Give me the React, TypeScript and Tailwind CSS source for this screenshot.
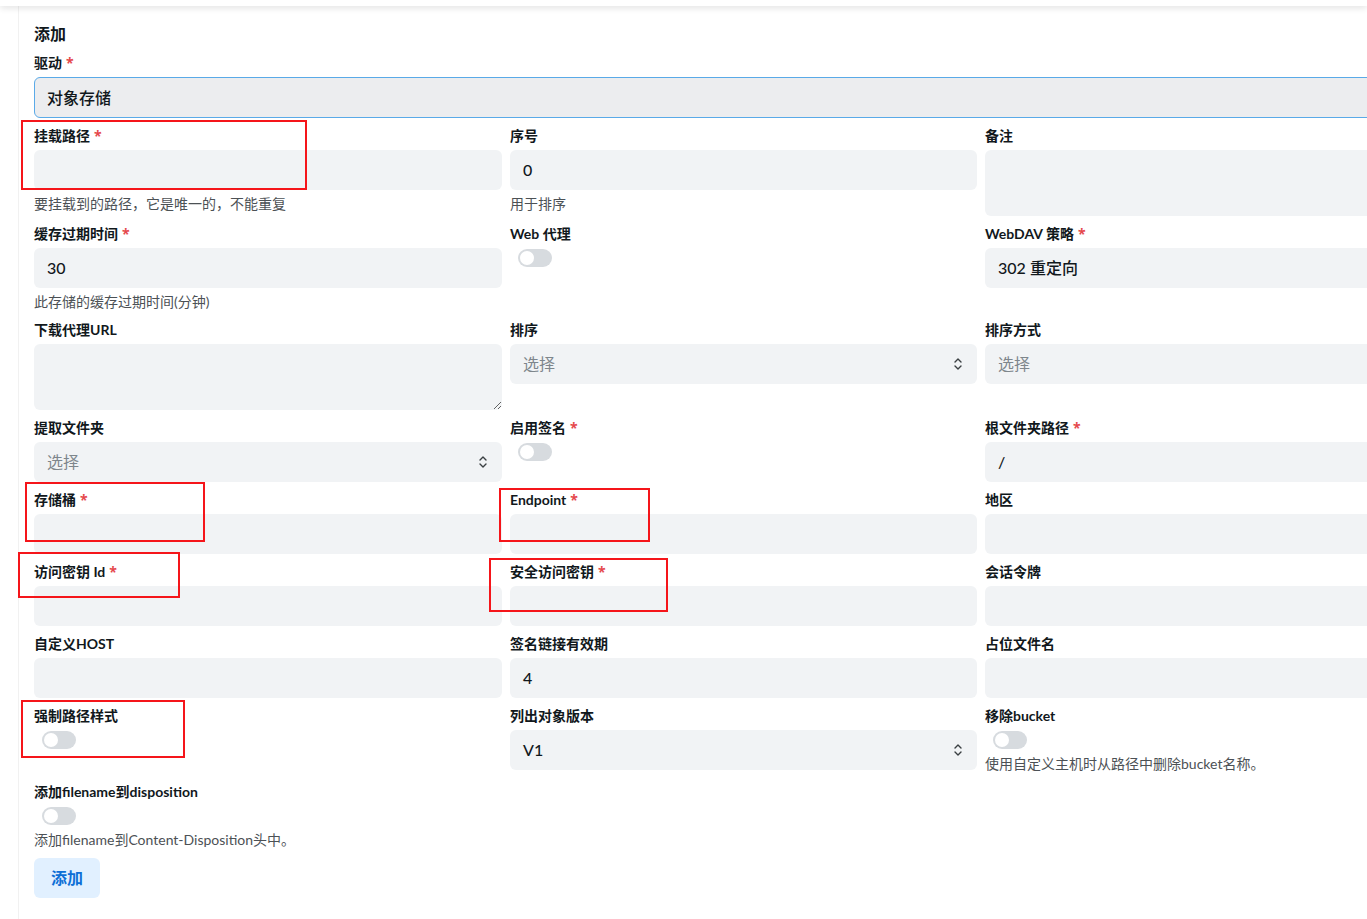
import React from "react";

const FONT = { fontFamily: '"Lato", "Noto Sans CJK SC", sans-serif' };

function Label({ text, req }: { text: string; req?: boolean }) {
  return (
    <div className="h-5 flex items-center text-[14px] leading-5 font-bold text-[#11181c] whitespace-nowrap">
      <span>{text}</span>
      {req && <span className="ml-1 text-[#e5484d]" style={{ fontFamily: '"Noto Sans", sans-serif' }}>*</span>}
    </div>
  );
}

function Help({ text }: { text: string }) {
  return <div className="mt-1 h-5 text-[14px] leading-5 text-[#4c5155] whitespace-nowrap">{text}</div>;
}

function Input({ value }: { value?: string }) {
  return (
    <div className="mt-1 h-10 w-full rounded-md bg-[#f1f3f5] px-[13px] flex items-center text-[16px] font-medium text-[#11181c]">
      {value}
    </div>
  );
}

function Chevrons() {
  return (
    <svg width="12" height="14" viewBox="0 0 12 14" fill="none" stroke="#3a3f42" strokeWidth="1.4" strokeLinecap="round" strokeLinejoin="round">
      <path d="M3 5 L6 2 L9 5" />
      <path d="M3 9 L6 12 L9 9" />
    </svg>
  );
}

function Select({ value, placeholder }: { value?: string; placeholder?: string }) {
  return (
    <div className="mt-1 h-10 w-full rounded-md bg-[#f1f3f5] pl-[13px] pr-[13px] flex items-center justify-between text-[16px]">
      {value ? <span className="text-[#11181c] font-medium">{value}</span> : <span className="text-[#7e868c]">{placeholder}</span>}
      <Chevrons />
    </div>
  );
}

function TextArea() {
  return (
    <textarea
      className="mt-1 block h-[66px] w-full rounded-md bg-[#f1f3f5] outline-none"
      style={{ resize: "vertical" }}
    />
  );
}

function Switch() {
  return (
    <div className="mt-1 h-5 flex items-center">
      <div className="ml-2 w-[34px] h-[18px] rounded-full bg-[#d7dbdf] flex items-center px-[2px]">
        <div className="w-[14px] h-[14px] rounded-full bg-white" />
      </div>
    </div>
  );
}

function Field({ children }: { children: React.ReactNode }) {
  return <div className="flex flex-col">{children}</div>;
}

function RedBox({ l, t, r, b }: { l: number; t: number; r: number; b: number }) {
  return (
    <div
      className="absolute border-2 border-[#f5151a] pointer-events-none"
      style={{ left: l, top: t, width: r - l, height: b - t }}
    />
  );
}

export default function App() {
  return (
    <div className="relative w-[1367px] h-[919px] overflow-hidden bg-white" style={FONT}>
      <div className="h-[6px] bg-white shadow-[0_2px_6px_rgba(0,0,0,0.12)] relative z-10" />
      <div className="flex">
        <div className="w-[18px] shrink-0" />
        <div className="border-l border-[#f1f1f1] pl-[15px] pt-[16px] pb-8 min-h-[913px]">
          <div className="w-[1420px]">
            <div className="text-[16px] leading-6 font-semibold text-[#11181c]">添加</div>
            <div className="mt-[7px] flex flex-col">
              <Label text="驱动" req />
              <div className="mt-1 h-[41px] w-full rounded-md bg-[#ecedef] border border-[#5aaae8] pl-3 flex items-center text-[16px] font-medium text-[#11181c]">
                对象存储
              </div>
            </div>
            <div className="mt-2 grid grid-cols-[468px_467px_469px] gap-x-2 gap-y-2">
              <Field>
                <Label text="挂载路径" req />
                <Input />
                <Help text="要挂载到的路径，它是唯一的，不能重复" />
              </Field>
              <Field>
                <Label text="序号" />
                <Input value="0" />
                <Help text="用于排序" />
              </Field>
              <Field>
                <Label text="备注" />
                <TextArea />
              </Field>

              <Field>
                <Label text="缓存过期时间" req />
                <Input value="30" />
                <Help text="此存储的缓存过期时间(分钟)" />
              </Field>
              <Field>
                <Label text="Web 代理" />
                <Switch />
              </Field>
              <Field>
                <Label text="WebDAV 策略" req />
                <Input value="302 重定向" />
              </Field>

              <Field>
                <Label text="下载代理URL" />
                <TextArea />
              </Field>
              <Field>
                <Label text="排序" />
                <Select placeholder="选择" />
              </Field>
              <Field>
                <Label text="排序方式" />
                <Select placeholder="选择" />
              </Field>

              <Field>
                <Label text="提取文件夹" />
                <Select placeholder="选择" />
              </Field>
              <Field>
                <Label text="启用签名" req />
                <Switch />
              </Field>
              <Field>
                <Label text="根文件夹路径" req />
                <Input value="/" />
              </Field>

              <Field>
                <Label text="存储桶" req />
                <Input />
              </Field>
              <Field>
                <Label text="Endpoint" req />
                <Input />
              </Field>
              <Field>
                <Label text="地区" />
                <Input />
              </Field>

              <Field>
                <Label text="访问密钥 Id" req />
                <Input />
              </Field>
              <Field>
                <Label text="安全访问密钥" req />
                <Input />
              </Field>
              <Field>
                <Label text="会话令牌" />
                <Input />
              </Field>

              <Field>
                <Label text="自定义HOST" />
                <Input />
              </Field>
              <Field>
                <Label text="签名链接有效期" />
                <Input value="4" />
              </Field>
              <Field>
                <Label text="占位文件名" />
                <Input />
              </Field>

              <Field>
                <Label text="强制路径样式" />
                <Switch />
              </Field>
              <Field>
                <Label text="列出对象版本" />
                <Select value="V1" />
              </Field>
              <Field>
                <Label text="移除bucket" />
                <Switch />
                <Help text="使用自定义主机时从路径中删除bucket名称。" />
              </Field>

              <Field>
                <Label text="添加filename到disposition" />
                <Switch />
                <Help text="添加filename到Content-Disposition头中。" />
              </Field>
            </div>
            <button className="mt-2 h-10 px-[17px] rounded-md bg-[#e1f0ff] text-[16px] font-semibold text-[#0d6fd6]">
              添加
            </button>
          </div>
        </div>
      </div>

      <RedBox l={21} t={120} r={307} b={190} />
      <RedBox l={25} t={482} r={205} b={542} />
      <RedBox l={18} t={552} r={180} b={598} />
      <RedBox l={21} t={700} r={185} b={758} />
      <RedBox l={499} t={488} r={650} b={542} />
      <RedBox l={489} t={558} r={668} b={612} />
    </div>
  );
}
